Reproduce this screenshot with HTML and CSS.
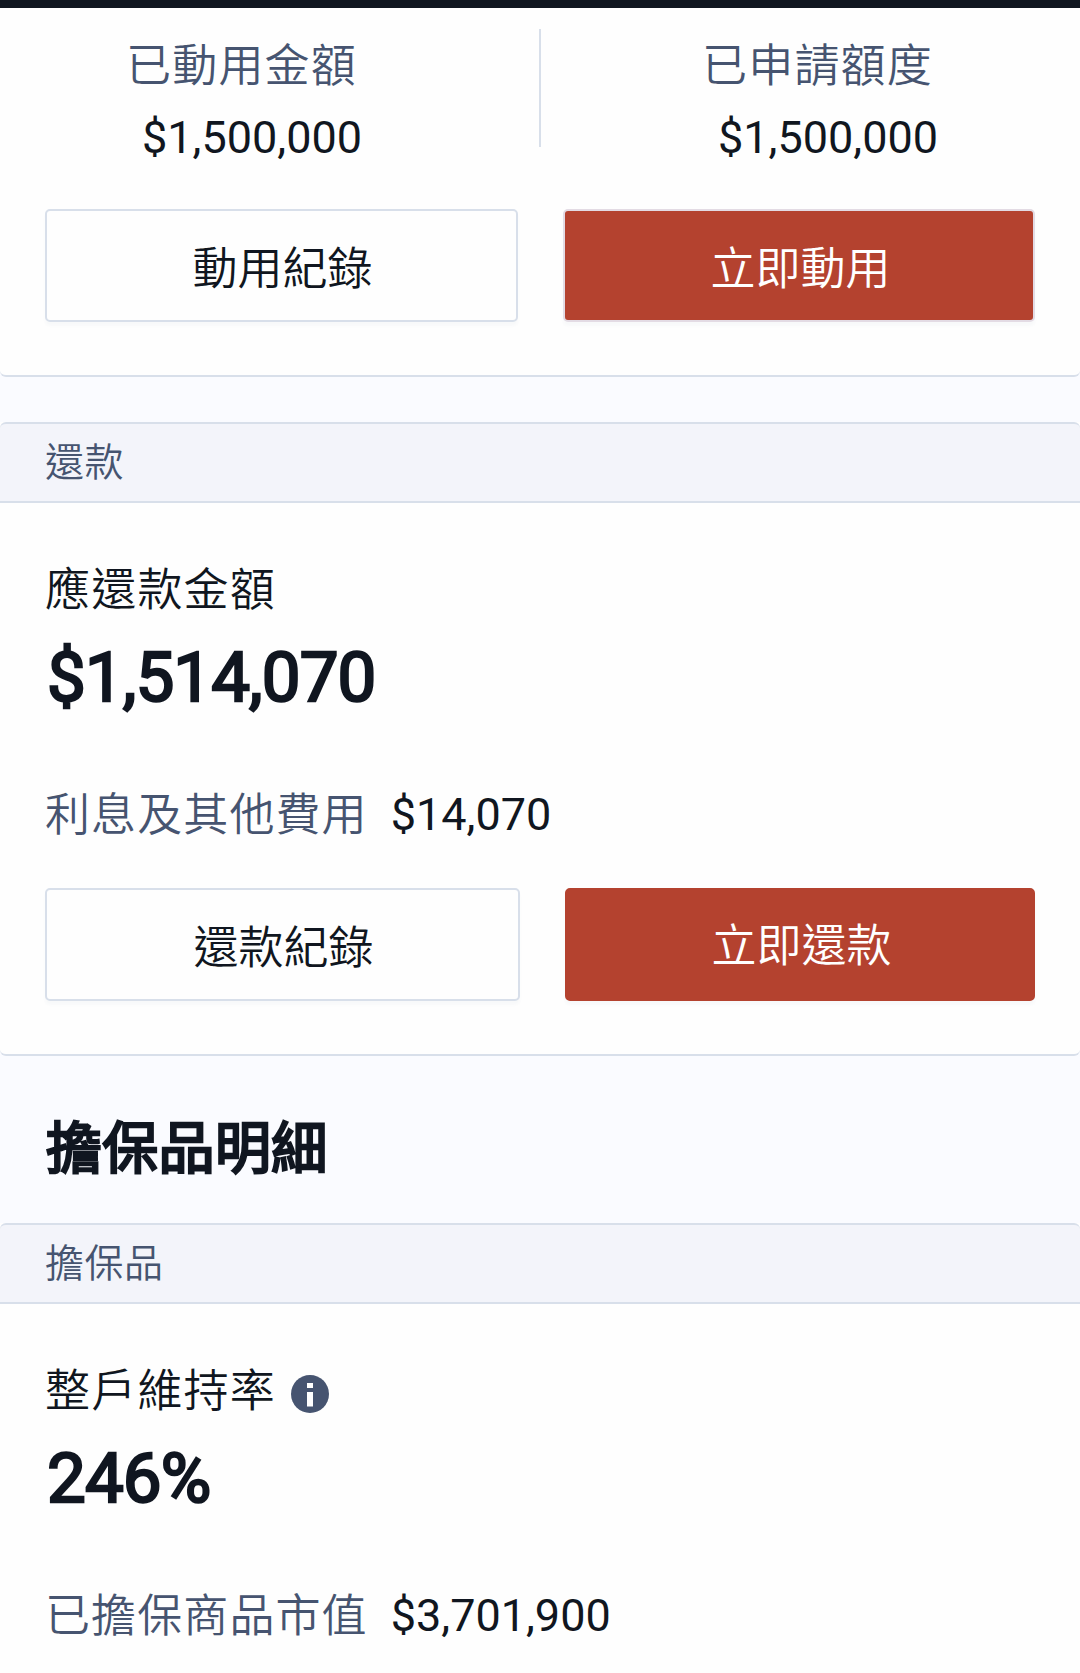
FILE: index.html
```html
<!DOCTYPE html>
<html lang="zh-Hant">
<head>
<meta charset="utf-8">
<title>擔保品明細</title>
<link rel="stylesheet" href="styles.css">
</head>
<body>
<div class="topbar"></div>
<section class="card card-summary">
  <div class="summary">
    <div class="stat">
      <span class="label muted">已動用金額</span>
      <span class="amount">$1,500,000</span>
    </div>
    <div class="divider"></div>
    <div class="stat stat-right">
      <span class="label muted">已申請額度</span>
      <span class="amount">$1,500,000</span>
    </div>
  </div>
  <div class="actions actions-draw">
    <button class="btn">動用紀錄</button>
    <button class="btn btn-primary btn-outlined">立即動用</button>
  </div>
</section>

<section class="card card-section">
  <header class="section-title">還款</header>
  <div class="section-body">
    <div class="label">應還款金額</div>
    <div class="figure">$1,514,070</div>
    <div class="detail"><span class="label muted">利息及其他費用</span><span class="amount">$14,070</span></div>
    <div class="actions">
      <button class="btn">還款紀錄</button>
      <button class="btn btn-primary btn-solid">立即還款</button>
    </div>
  </div>
</section>

<h2 class="page-heading">擔保品明細</h2>

<section class="card card-last">
  <header class="section-title">擔保品</header>
  <div class="section-body">
    <div class="label label-row">整戶維持率
      <svg class="info" viewBox="0 0 38 38" aria-hidden="true"><circle cx="19" cy="19" r="19" fill="#465470"/><path d="M16 8h6v5h-6zM16 17h6v14.500h-6z" fill="#fff"/></svg>
    </div>
    <div class="figure">246%</div>
    <div class="detail"><span class="label muted">已擔保商品市值</span><span class="amount">$3,701,900</span></div>
  </div>
</section>
</body>
</html>
```
FILE: styles.css
```css
* { box-sizing: border-box; }
body {
  margin: 0;
  height: 1673px;
  overflow: hidden;
  background: #fafbff;
  color: #101620;
  font-family: "Noto Sans CJK TC", sans-serif;
  font-size: 45px;
  font-weight: 350;
}
.topbar { height: 8px; background: #101620; }
.card { background: #fefefe; border-bottom: 2px solid #d8dfea; border-radius: 0 0 6px 6px; }
.card-summary { padding: 21px 45px 53px; }
.summary { display: grid; grid-template-columns: 494px 2px 1fr; height: 180px; }
.divider { height: 118px; background: #d8dfea; }
.stat { display: flex; flex-direction: column; gap: 9px; padding: 1px 0 0 81px; }
.stat-right { padding-left: 161px; }
.stat .amount { padding-left: 16px; }
.label { font-size: 45px; line-height: 66px; letter-spacing: 1.2px; white-space: nowrap; }
.muted { color: #465470; }
.amount { font-family: Roboto, sans-serif; font-size: 45px; font-weight: 400; line-height: 66px; }
.actions { display: grid; grid-template-columns: 475px 470px; gap: 45px; }
.actions-draw { grid-template-columns: 473px 472px; }
.btn {
  height: 113px;
  padding: 0 0 0 2px;
  background: #fefefe;
  border: 2px solid #d8dfea;
  border-radius: 5px;
  box-shadow: 0 4px 3px rgba(70, 84, 112, 0.03);
  color: #101620;
  font: 350 45px/66px "Noto Sans CJK TC", sans-serif;
}
.btn-primary { padding-left: 3px; background: #b4422f; border-color: #b4422f; color: #fff; }
.btn-outlined { border-color: #e3dbe4; }
.btn-solid { padding-bottom: 4px; }
.card-section { margin-top: 45px; }
.section-title {
  height: 81px;
  padding-left: 45px;
  background: #f3f4fa;
  border: solid #d8dfea;
  border-width: 2px 0;
  border-radius: 6px 6px 0 0;
  color: #465470;
  font-size: 39px;
  line-height: 71px;
  letter-spacing: 0.5px;
}
.section-body { padding: 51px 45px 53px; }
.figure {
  margin: 13px 0 0 2px;
  font: 69px/90px Roboto, sans-serif;
  letter-spacing: -0.9px;
  -webkit-text-stroke: 2.4px #101620;
}
.detail { display: flex; align-items: flex-start; gap: 23px; height: 66px; margin: 55px 0 44px; }
.detail .label { margin-top: 1px; letter-spacing: 1.1px; }
.detail .amount { margin-top: 4px; }
.page-heading {
  margin: 43px 46px 34px;
  font-size: 56px;
  font-weight: 400;
  line-height: 90px;
  letter-spacing: 0.3px;
  -webkit-text-stroke: 2.6px #101620;
}
.label-row { display: flex; align-items: center; gap: 15px; }
.info { width: 38px; height: 38px; margin-top: 11px; }
.card-last { border-radius: 0; border-bottom: 0; }
```
